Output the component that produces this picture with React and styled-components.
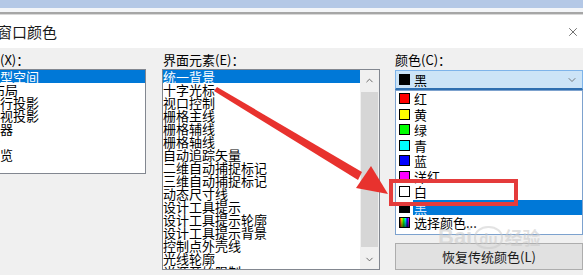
import React from "react";
import styled, { createGlobalStyle } from "styled-components";
import { X, ChevronUp, ChevronDown } from "lucide-react";

const Global = createGlobalStyle`
  html, body {
    margin: 0;
    padding: 0;
    overflow: hidden;
  }
`;

const Page = styled.div`
  position: relative;
  width: 583px;
  height: 275px;
  overflow: hidden;
  background: #f0f0f0;
  font-family: "Noto Sans CJK SC", "Liberation Sans", sans-serif;
  color: #000;
`;

const TopStrip = styled.div`
  height: 8px;
  background: #b4c8e6;
`;

const Separator = styled.div`
  height: 7px;
  background: linear-gradient(#f3f5f8 0 4px, #a6a6a6 4px 6px, #d8d8d8 6px);
`;

const TitleBar = styled.div`
  height: 33px;
  background: #fff;
  display: flex;
  align-items: center;
  justify-content: space-between;
  padding-right: 3px;
`;

const Title = styled.span`
  font-size: 15px;
  margin-left: -3px;
  color: #1a1a1a;
`;

const Body = styled.div`
  display: flex;
  align-items: flex-start;
  padding-top: 5px;
  margin-left: -42px;
`;

const Column = styled.div`
  width: ${(p) => p.$width}px;
  margin-right: ${(p) => p.$gap || 0}px;
  display: flex;
  flex-direction: column;
  flex-shrink: 0;
`;

const Label = styled.div`
  font-size: 13px;
  line-height: 13px;
  height: 13px;
  margin-bottom: 3px;
  padding-left: ${(p) => p.$indent || 0}px;
  white-space: nowrap;
`;

const ListBox = styled.div`
  height: ${(p) => p.$height}px;
  box-sizing: border-box;
  border: 1px solid #828790;
  background: #fff;
  display: flex;
  overflow: hidden;
`;

const Items = styled.div`
  flex: 1;
  display: flex;
  flex-direction: column;
  overflow: hidden;
`;

const Item = styled.div`
  font-size: 13px;
  line-height: 13px;
  height: 13px;
  flex-shrink: 0;
  white-space: nowrap;
  padding-left: ${(p) => p.$indent || 0}px;
  background: ${(p) => (p.$selected ? "#0078d7" : "transparent")};
  color: ${(p) => (p.$selected ? "#fff" : "#000")};
`;

const ScrollBar = styled.div`
  width: 19px;
  background: #f0f0f0;
  display: flex;
  flex-direction: column;
`;

const ScrollButton = styled.div`
  height: 20px;
  display: flex;
  align-items: center;
  justify-content: center;
  color: #606060;
`;

const Thumb = styled.div`
  flex: 1;
  margin: 2px 1px;
  background: #d6d6d6;
`;

const Combo = styled.div`
  height: 20px;
  margin-top: 1px;
  box-sizing: border-box;
  border: 1px solid #7eb4ea;
  border-bottom: 2px solid #2f6fb0;
  background: #cce4f7;
  display: flex;
  align-items: center;
  padding: 0 4px 0 3px;
  gap: 4px;
  font-size: 13px;
`;

const ComboText = styled.span`
  flex: 1;
`;

const DropList = styled.div`
  box-sizing: border-box;
  border: 1px solid #7da2ce;
  background: #fff;
  padding-bottom: 3px;
  display: flex;
  flex-direction: column;
`;

const ColorRow = styled.div`
  height: 15.5px;
  display: flex;
  align-items: center;
  padding-left: 3px;
  gap: 3px;
  font-size: 13px;
`;

const Swatch = styled.span`
  width: 11px;
  height: 11px;
  box-sizing: border-box;
  border: 1px solid #000;
  flex-shrink: 0;
  background: ${(p) => p.$color};
`;

const ColorName = styled.span`
  flex: 1;
  line-height: 15px;
  padding-left: 1px;
  background: ${(p) => (p.$selected ? "#0078d7" : "transparent")};
  color: ${(p) => (p.$selected ? "#dbe9ff" : "#000")};
`;

const Button = styled.div`
  margin-top: 8px;
  height: 27px;
  box-sizing: border-box;
  border: 1px solid #adadad;
  background: #e1e1e1;
  display: flex;
  align-items: center;
  justify-content: center;
  font-size: 13px;
  color: #1a1a1a;
`;

const Overlay = styled.svg`
  position: absolute;
  left: 0;
  top: 0;
  pointer-events: none;
`;

const Watermark = styled.div`
  position: absolute;
  left: 438px;
  top: 224px;
  display: flex;
  align-items: center;
  gap: 2px;
  color: rgba(200, 200, 200, 0.55);
  font-family: "Liberation Sans", "Noto Sans CJK SC", sans-serif;
  font-weight: bold;
  font-size: 22px;
  pointer-events: none;
`;

const Paw = styled.span`
  font-size: 15px;
  padding: 2px 3px 0;
  border-radius: 50% 50% 45% 45%;
  border: 2px solid rgba(200, 200, 200, 0.5);
`;

const Small = styled.span`
  font-size: 18px;
  font-family: "Noto Sans CJK SC", sans-serif;
`;

const contexts = [
  "二维模型空间",
  "图纸/布局",
  "三维平行投影",
  "三维透视投影",
  "块编辑器",
  "命令行",
  "打印预览",
];

const elements = [
  "统一背景",
  "十字光标",
  "视口控制",
  "栅格主线",
  "栅格辅线",
  "栅格轴线",
  "自动追踪矢量",
  "二维自动捕捉标记",
  "三维自动捕捉标记",
  "动态尺寸线",
  "设计工具提示",
  "设计工具提示轮廓",
  "设计工具提示背景",
  "控制点外壳线",
  "光线轮廓",
  "光源开始限制",
];

const colors = [
  { name: "红", color: "#ff0000" },
  { name: "黄", color: "#ffff00" },
  { name: "绿", color: "#00ff00" },
  { name: "青", color: "#00ffff" },
  { name: "蓝", color: "#0000ff" },
  { name: "洋红", color: "#ff00ff" },
  { name: "白", color: "#ffffff" },
  { name: "黑", color: "#000000", selected: true },
  {
    name: "选择颜色...",
    color:
      "linear-gradient(rgba(0,0,0,0), rgba(0,0,0,0.6)), linear-gradient(90deg, red, yellow, lime, cyan, blue, magenta)",
  },
];

export default function App() {
  return (
    <Page>
      <Global />
      <TopStrip />
      <Separator />
      <TitleBar>
        <Title>窗口颜色</Title>
        <X size={14} strokeWidth={1.2} color="#333" />
      </TitleBar>
      <Body>
        <Column $width={188} $gap={16}>
          <Label $indent={3}>上下文(X)：</Label>
          <ListBox $height={105}>
            <Items>
              {contexts.map((c, i) => (
                <Item key={c} $indent={2} $selected={i === 0}>
                  {c}
                </Item>
              ))}
            </Items>
          </ListBox>
        </Column>
        <Column $width={218} $gap={15}>
          <Label $indent={1}>界面元素(E)：</Label>
          <ListBox $height={201}>
            <Items>
              {elements.map((e, i) => (
                <Item key={e} $selected={i === 0}>
                  {e}
                </Item>
              ))}
            </Items>
            <ScrollBar>
              <ScrollButton>
                <ChevronUp size={11} strokeWidth={2} />
              </ScrollButton>
              <Thumb />
              <ScrollButton>
                <ChevronDown size={11} strokeWidth={2} />
              </ScrollButton>
            </ScrollBar>
          </ListBox>
        </Column>
        <Column $width={188}>
          <Label>颜色(C)：</Label>
          <Combo>
            <Swatch $color="#000" />
            <ComboText>黑</ComboText>
            <ChevronDown size={12} strokeWidth={1.5} color="#555" />
          </Combo>
          <DropList>
            {colors.map((c) => (
              <ColorRow key={c.name}>
                <Swatch $color={c.color} />
                <ColorName $selected={c.selected}>{c.name}</ColorName>
              </ColorRow>
            ))}
          </DropList>
          <Button>恢复传统颜色(L)</Button>
        </Column>
      </Body>
      <Watermark>
        <span>Bai</span>
        <Paw>du</Paw>
        <Small>经验</Small>
      </Watermark>
      <Overlay width="583" height="275" viewBox="0 0 583 275">
        <polygon
          points="214,91 217,87 362,172 358,180"
          fill="#e8322e"
        />
        <polygon points="388,194 356,188 371,166" fill="#e8322e" />
        <rect
          x="391"
          y="181"
          width="125"
          height="23"
          fill="none"
          stroke="#e43b3b"
          strokeWidth="4"
        />
      </Overlay>
    </Page>
  );
}
